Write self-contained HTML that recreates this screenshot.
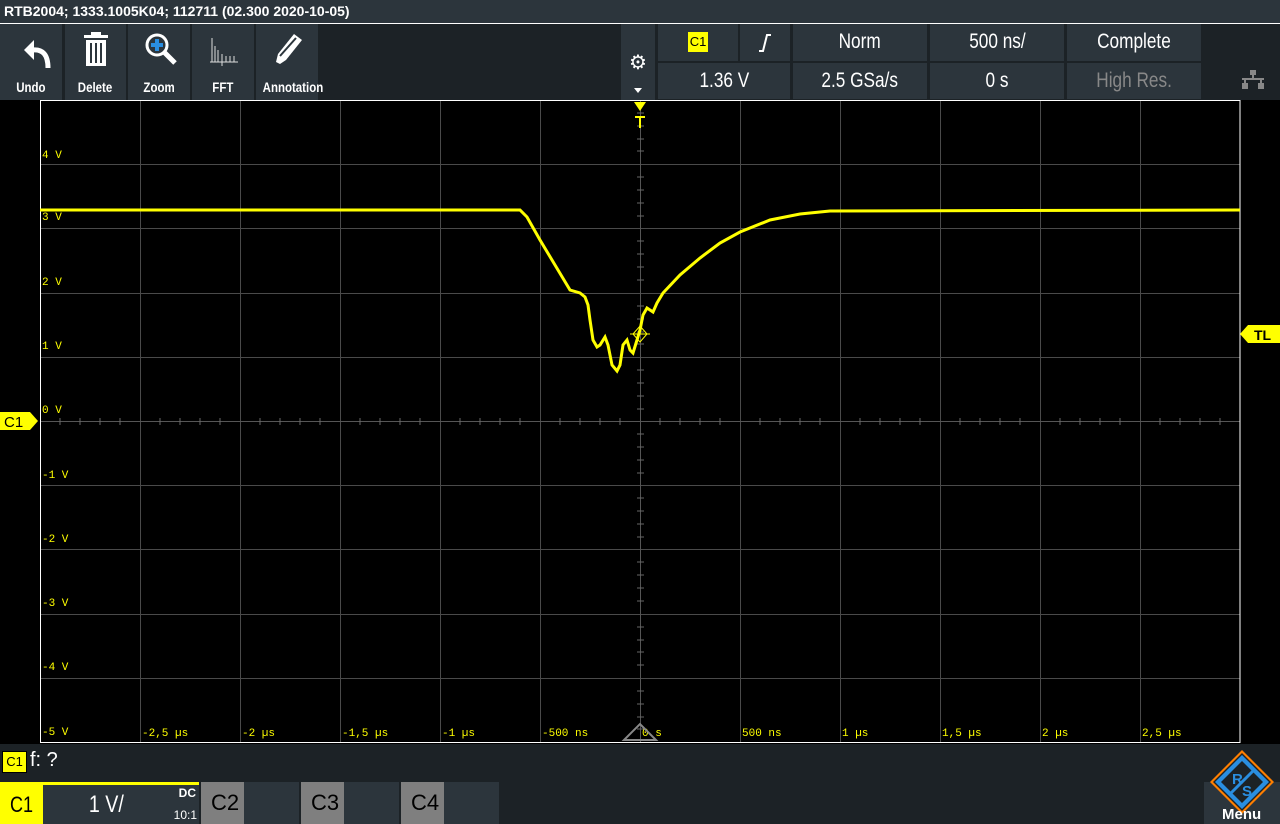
<!DOCTYPE html>
<html><head><meta charset="utf-8"><style>
*{margin:0;padding:0;box-sizing:border-box}
body{width:1280px;height:824px;background:#000;overflow:hidden;position:relative;font-family:"Liberation Sans",sans-serif;color:#fff}
.abs{position:absolute}
.n{display:inline-block;transform:scaleX(0.82)}
.btn{position:absolute;top:24px;height:76px;background:#2c353c;}
.btn .lbl{position:absolute;bottom:5px;width:100%;text-align:center;font-size:14px;font-weight:bold}
.cell{position:absolute;background:#2c353c;color:#fff;font-size:21px;text-align:center;line-height:36px}
</style></head><body>
<div class="abs" style="left:0;top:0;width:1280px;height:23px;background:#2c353c;font:bold 14px 'Liberation Sans',sans-serif;line-height:23px;padding-left:4px">RTB2004; 1333.1005K04; 112711 (02.300 2020-10-05)</div>
<div class="abs" style="left:0;top:23px;width:1280px;height:1px;background:#fff"></div>
<div class="abs" style="left:0;top:24px;width:1280px;height:76px;background:#1c2226"></div>
<div class="btn" style="left:0;width:62px"><svg class="abs" style="left:20px;top:12px" width="32" height="34"><path d="M14 4 L4 14 L14 24 Z" fill="#fff"/><path d="M12 14 Q28 12 28 32" stroke="#fff" stroke-width="5" fill="none"/></svg><div class="lbl"><span class="n">Undo</span></div></div>
<div class="btn" style="left:65px;width:61px"><svg class="abs" style="left:18px;top:8px" width="26" height="34"><rect x="1" y="3" width="24" height="3" fill="#fff"/><rect x="8" y="0" width="10" height="4" fill="#fff"/><rect x="3" y="8" width="20" height="26" fill="#fff"/><rect x="7" y="11" width="2" height="20" fill="#2c353c"/><rect x="12" y="11" width="2" height="20" fill="#2c353c"/><rect x="17" y="11" width="2" height="20" fill="#2c353c"/></svg><div class="lbl"><span class="n">Delete</span></div></div>
<div class="btn" style="left:128px;width:62px"><svg class="abs" style="left:16px;top:8px" width="34" height="36"><circle cx="13" cy="13" r="10" stroke="#fff" stroke-width="3" fill="none"/><path d="M13 7v12M7 13h12" stroke="#2a8ee0" stroke-width="4"/><path d="M20 20 L31 31" stroke="#fff" stroke-width="5"/></svg><div class="lbl"><span class="n">Zoom</span></div></div>
<div class="btn" style="left:192px;width:62px"><svg class="abs" style="left:17px;top:12px" width="30" height="30"><path d="M3 2v24M6 10v16M9 14v12M13 18v12M17 20v6M21 20v6M25 20v6M1 26h28" stroke="#ddd" stroke-width="1"/></svg><div class="lbl"><span class="n">FFT</span></div></div>
<div class="btn" style="left:256px;width:62px"><svg class="abs" style="left:18px;top:8px" width="30" height="34"><path d="M6 32 L2 30 L4 22 L20 2 L28 8 L12 28 Z" fill="#fff"/><path d="M6 24 L22 6" stroke="#2c353c" stroke-width="2"/></svg><div class="lbl"><span class="n">Annotation</span></div></div>
<div class="btn" style="left:621px;width:34px;background:#2c353c"><div class="abs" style="left:8px;top:26px;font-size:20px">⚙</div><div class="abs" style="left:13px;top:64px;width:0;height:0;border-left:4px solid transparent;border-right:4px solid transparent;border-top:5px solid #fff"></div></div>
<div class="cell" style="left:658px;top:24px;width:80px;height:37px"><span style="display:inline-block;background:#ffff00;color:#000;font-size:13px;line-height:20px;width:20px;margin-top:8px;vertical-align:top">C1</span></div>
<div class="cell" style="left:740px;top:24px;width:50px;height:37px"><svg width="14" height="20" style="margin-top:9px;vertical-align:top"><path d="M1 18h4l4-16h4" stroke="#fff" stroke-width="2" fill="none"/></svg></div>
<div class="cell" style="left:793px;top:24px;width:134px;height:37px"><span class="n">Norm</span></div>
<div class="cell" style="left:930px;top:24px;width:134px;height:37px"><span class="n">500 ns/</span></div>
<div class="cell" style="left:1067px;top:24px;width:134px;height:37px"><span class="n">Complete</span></div>
<div class="cell" style="left:658px;top:63px;width:132px;height:36px"><span class="n">1.36 V</span></div>
<div class="cell" style="left:793px;top:63px;width:134px;height:36px"><span class="n">2.5 GSa/s</span></div>
<div class="cell" style="left:930px;top:63px;width:134px;height:36px"><span class="n">0 s</span></div>
<div class="cell" style="left:1067px;top:63px;width:134px;height:36px;color:#888"><span class="n">High Res.</span></div>
<svg class="abs" style="left:1242px;top:70px" width="22" height="20"><rect x="8" y="0" width="6" height="5" fill="#888"/><path d="M11 5v4M3 9v4M19 9v4M0 9h22" stroke="#888" stroke-width="2"/><rect x="0" y="13" width="6" height="6" fill="#888"/><rect x="16" y="13" width="6" height="6" fill="#888"/></svg>

<svg class="abs" style="left:0;top:100px" width="1280" height="644">
<g stroke="#4a4a4a" stroke-width="1">
<path d="M140.5 0v642M240.5 0v642M340.5 0v642M440.5 0v642M540.5 0v642M740.5 0v642M840.5 0v642M940.5 0v642M1040.5 0v642M1140.5 0v642"/>
<path d="M40 64.5h1200M40 128.5h1200M40 193.5h1200M40 257.5h1200M40 385.5h1200M40 449.5h1200M40 514.5h1200M40 578.5h1200"/>
<path d="M40 321.5h1200M640.5 0v642" stroke="#555"/>
</g>
<g stroke="#666">
<path d="M60 318v7M80 318v7M100 318v7M120 318v7M160 318v7M180 318v7M200 318v7M220 318v7M260 318v7M280 318v7M300 318v7M320 318v7M360 318v7M380 318v7M400 318v7M420 318v7M460 318v7M480 318v7M500 318v7M520 318v7M560 318v7M580 318v7M600 318v7M620 318v7M660 318v7M680 318v7M700 318v7M720 318v7M760 318v7M780 318v7M800 318v7M820 318v7M860 318v7M880 318v7M900 318v7M920 318v7M960 318v7M980 318v7M1000 318v7M1020 318v7M1060 318v7M1080 318v7M1100 318v7M1120 318v7M1160 318v7M1180 318v7M1200 318v7M1220 318v7"/>
<path d="M637 13h7M637 26h7M637 39h7M637 51h7M637 77h7M637 90h7M637 103h7M637 116h7M637 141h7M637 154h7M637 167h7M637 180h7M637 206h7M637 219h7M637 232h7M637 244h7M637 270h7M637 283h7M637 296h7M637 309h7M637 334h7M637 347h7M637 360h7M637 373h7M637 398h7M637 411h7M637 424h7M637 437h7M637 462h7M637 475h7M637 488h7M637 501h7M637 527h7M637 540h7M637 552h7M637 565h7M637 591h7M637 604h7M637 617h7M637 629h7"/>
</g>
<path d="M40.5 0v642.5H1240V0.5H40.5" stroke="#fff" fill="none"/>
<g fill="#ffff00" font-family="Liberation Mono,monospace" font-size="11">
<text x="42" y="58">4 V</text><text x="42" y="120">3 V</text><text x="42" y="185">2 V</text><text x="42" y="249">1 V</text><text x="42" y="313">0 V</text><text x="42" y="378">-1 V</text><text x="42" y="442">-2 V</text><text x="42" y="506">-3 V</text><text x="42" y="570">-4 V</text><text x="42" y="635">-5 V</text>
<text x="142" y="636">-2,5 µs</text><text x="242" y="636">-2 µs</text><text x="342" y="636">-1,5 µs</text><text x="442" y="636">-1 µs</text><text x="542" y="636">-500 ns</text><text x="642" y="636">0 s</text><text x="742" y="636">500 ns</text><text x="842" y="636">1 µs</text><text x="942" y="636">1,5 µs</text><text x="1042" y="636">2 µs</text><text x="1142" y="636">2,5 µs</text>
</g>
<path d="M40 110 L520 110 L527 117 L540 140 L555 165 L570 190 L580 193 L585 197 L588 205 L590 220 L593 240 L597 247 L600 245 L605 237 L608 245 L612 265 L617 271 L620 265 L623 245 L627 240 L630 250 L633 253 L637 240 L640 230 L643 215 L647 208 L650 210 L653 212 L657 203 L663 193 L680 175 L700 158 L720 143 L740 132 L770 120 L800 114 L830 111 L1240 110" stroke="#ffff00" stroke-width="3" fill="none"/>
<path d="M640 226 L647 234 L640 242 L633 234Z M630 234h20" stroke="#ffff00" fill="none"/>
<path d="M624 640 L640 624 L656 640Z" stroke="#888" stroke-width="2" fill="none"/>
<path d="M634 2h12l-6 9z" fill="#ffff00"/><path d="M635 17h10M640 17v11" stroke="#ffff00" stroke-width="2"/>
<path d="M0 312h30l8 9-8 9H0z" fill="#ffff00"/><text x="4" y="327" font-size="15" fill="#000" font-family="Liberation Sans,sans-serif">C1</text>
<path d="M1280 225h-32l-8 9 8 9h32z" fill="#ffff00"/><text x="1254" y="240" font-size="14" font-weight="bold" fill="#000" font-family="Liberation Sans,sans-serif">TL</text>
</svg>

<div class="abs" style="left:0;top:744px;width:1280px;height:38px;background:#1c2226"></div>
<div class="abs" style="left:2px;top:751px;width:25px;height:22px;background:#ffff00;border:1px solid #000;color:#000;font-size:13px;text-align:center;line-height:20px">C1</div>
<div class="abs" style="left:30px;top:749px;font-size:20px">f: ?</div>
<div class="abs" style="left:0;top:782px;width:1280px;height:42px;background:#1c2226"></div>
<div class="abs" style="left:0;top:782px;width:199px;height:3px;background:#ffff00"></div>
<div class="abs" style="left:0;top:785px;width:43px;height:39px;background:#ffff00;color:#000;font-size:22px;line-height:39px;padding-left:10px"><span class="n" style="transform-origin:left">C1</span></div>
<div class="abs" style="left:43px;top:785px;width:156px;height:39px;background:#2c353c"><div class="abs" style="left:42px;top:6px;font-size:24px"><span class="n">1 V/</span></div><div class="abs" style="right:3px;top:1px;font-size:12px;font-weight:bold">DC</div><div class="abs" style="right:2px;top:23px;font-size:12px">10:1</div></div>
<div class="abs" style="left:201px;top:782px;width:98px;height:42px;background:#2c353c"><div style="position:absolute;left:0;top:0;width:43px;height:42px;background:#7f7f7f;color:#000;font-size:22px;line-height:42px;padding-left:10px">C2</div></div>
<div class="abs" style="left:301px;top:782px;width:98px;height:42px;background:#2c353c"><div style="position:absolute;left:0;top:0;width:43px;height:42px;background:#7f7f7f;color:#000;font-size:22px;line-height:42px;padding-left:10px">C3</div></div>
<div class="abs" style="left:401px;top:782px;width:98px;height:42px;background:#2c353c"><div style="position:absolute;left:0;top:0;width:43px;height:42px;background:#7f7f7f;color:#000;font-size:22px;line-height:42px;padding-left:10px">C4</div></div>
<div class="abs" style="left:1204px;top:782px;width:76px;height:42px;background:#2c353c"></div>
<svg class="abs" style="left:1208px;top:748px" width="68" height="68"><path d="M34 2 L66 34 L34 66 L2 34Z" fill="#ff7f00"/><path d="M34 5 L63 34 L34 63 L5 34Z" fill="#1c2226"/><path d="M34 7 L61 34 L34 61 L7 34Z" fill="#2a8ee0"/><path d="M34 13 L55 34 L34 55 L13 34Z" fill="#1c2226"/><path d="M22 46 L46 22" stroke="#2a8ee0" stroke-width="3"/><text x="24" y="36" font-size="15" font-weight="bold" fill="#2a8ee0" font-family="Liberation Sans,sans-serif">R</text><text x="34" y="48" font-size="15" font-weight="bold" fill="#2a8ee0" font-family="Liberation Sans,sans-serif">S</text></svg>
<div class="abs" style="left:1222px;top:806px;font-size:15px;font-weight:bold;font-family:'Liberation Sans',sans-serif">Menu</div>
</body></html>
